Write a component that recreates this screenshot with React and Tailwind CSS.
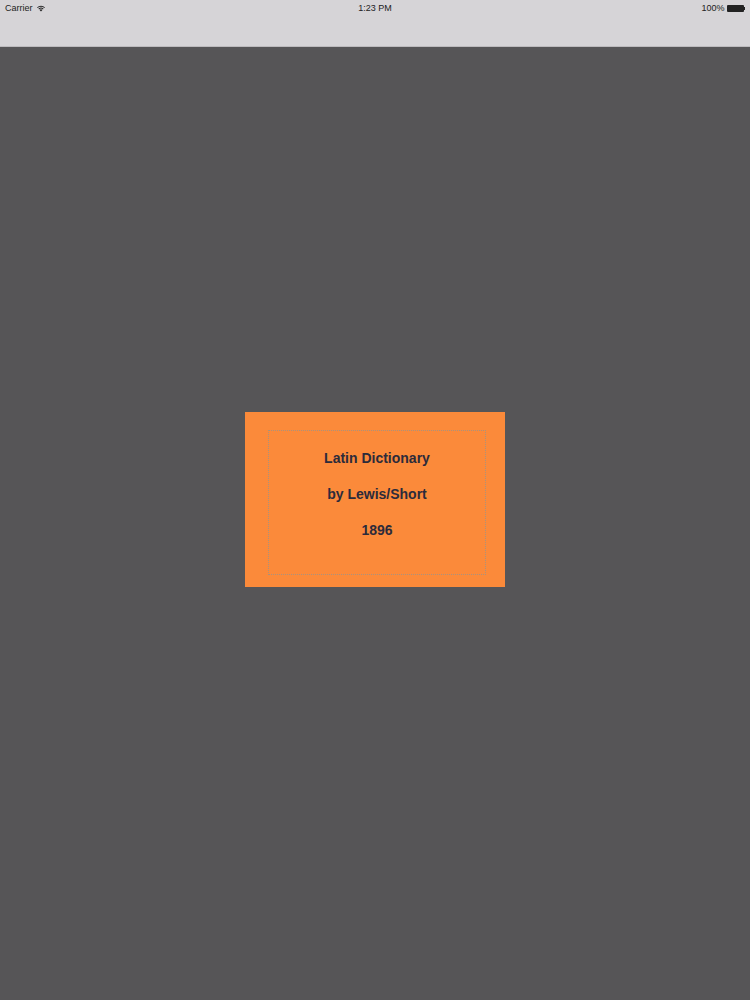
import React from "react";

const StatusBar = () => (
  <div className="relative h-[14px] flex items-center justify-between px-[5px] text-[9px] text-[#222] leading-none">
    <div className="flex items-center gap-[3px]">
      <span>Carrier</span>
      <svg width="10" height="8" viewBox="0 0 10 8">
        <path d="M5 7.5 L3.6 6 A2 2 0 0 1 6.4 6 Z" fill="#222" />
        <path d="M2.4 4.8 A3.7 3.7 0 0 1 7.6 4.8 L6.9 5.5 A2.7 2.7 0 0 0 3.1 5.5 Z" fill="#222" />
        <path d="M1 3.4 A5.6 5.6 0 0 1 9 3.4 L8.3 4.1 A4.6 4.6 0 0 0 1.7 4.1 Z" fill="#222" />
      </svg>
    </div>
    <span className="absolute left-1/2 -translate-x-1/2">1:23 PM</span>
    <div className="flex items-center gap-[2px]">
      <span>100%</span>
      <div className="flex items-center">
        <div className="w-[17px] h-[7px] bg-[#222] rounded-[1px]" />
        <div className="w-[1.5px] h-[3px] bg-[#222]" />
      </div>
    </div>
  </div>
);

export default function App() {
  return (
    <div
      className="w-[750px] h-[1000px] flex flex-col bg-[#565557]"
      style={{ fontFamily: '"Liberation Sans", Arial, sans-serif' }}
    >
      <div className="h-[47px] bg-[#d6d4d7] border-b border-[#bdbbbe] pt-[1px]">
        <StatusBar />
      </div>
      <div className="flex-1 flex items-start justify-center">
        <div className="mt-[365px] w-[260px] h-[175px] bg-[#fb8a3a] pt-[18px] pl-[23px] pr-[19px] pb-[12px]">
          <div className="h-full border border-dotted border-[#a8927e] flex flex-col items-center pt-[18px] gap-[18px] text-[14px] font-bold text-[#2c2b3a] leading-[18px]">
            <span>Latin Dictionary</span>
            <span>by Lewis/Short</span>
            <span>1896</span>
          </div>
        </div>
      </div>
    </div>
  );
}
